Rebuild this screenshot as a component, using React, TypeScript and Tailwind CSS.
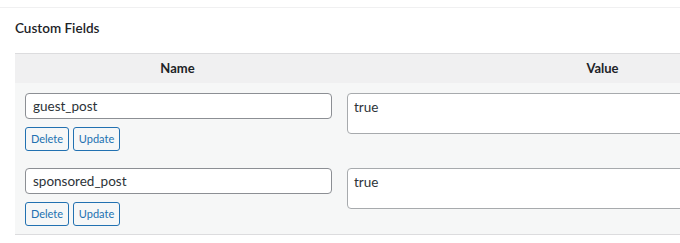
import React from 'react';

const FIELDS = [
  { name: 'guest_post', value: 'true' },
  { name: 'sponsored_post', value: 'true' },
];

function FieldRow({ name, value, first }: { name: string; value: string; first: boolean }) {
  return (
    <div className={`grid grid-cols-[325px_525px] ${first ? 'pt-[10px]' : 'pt-[17px]'}`}>
      <div className="pl-[10px]">
        <input
          type="text"
          defaultValue={name}
          className="w-[307px] h-[26px] px-[7px] rounded-[4px] border border-[#8c8f94] bg-white text-[13.5px] text-[#2c3338] outline-none"
        />
        <div className="flex gap-[4px] mt-[8px]">
          <button className="h-[24px] w-[44px] rounded-[3px] border border-[#2271b1] bg-[#f6f7f7] text-[11px] text-[#2271b1]">
            Delete
          </button>
          <button className="h-[24px] w-[47px] rounded-[3px] border border-[#2271b1] bg-[#f6f7f7] text-[11px] text-[#2271b1]">
            Update
          </button>
        </div>
      </div>
      <div className="pl-[7px] pr-[10px]">
        <textarea
          defaultValue={value}
          rows={2}
          className="block w-full h-[41px] px-[6px] py-[3px] rounded-[4px] border border-[#a7aaad] bg-white text-[13.5px] leading-[20px] text-[#2c3338] resize-none outline-none"
        />
      </div>
    </div>
  );
}

export default function App() {
  return (
    <div
      className="w-[680px] h-[243px] overflow-hidden bg-white"
      style={{ fontFamily: 'Lato, "Noto Sans", sans-serif' }}
    >
      <div className="h-[7px]" />
      <div className="border-t border-[#f0f0f1]">
        <h2 className="pl-[15px] pt-[10px] h-[45px] text-[13.5px] font-semibold text-[#1d2327] leading-[20px]">
          Custom Fields
        </h2>
        <div className="ml-[15px] w-[850px]">
          <div className="grid grid-cols-[325px_525px] h-[30px] items-center bg-[#f0f0f1] border-t border-[#dcdcde] text-[13px] font-bold text-[#1d2327]">
            <div className="text-center">Name</div>
            <div className="text-center">Value</div>
          </div>
          <div className="bg-[#f6f7f7] border-b border-[#dcdcde] pb-[8px]">
            {FIELDS.map((f, i) => (
              <FieldRow key={f.name} name={f.name} value={f.value} first={i === 0} />
            ))}
          </div>
        </div>
      </div>
    </div>
  );
}
